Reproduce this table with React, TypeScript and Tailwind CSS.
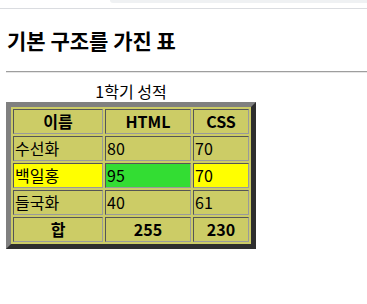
const rows = [
  { name: '수선화', html: '80', css: '70', rowBg: '', htmlBg: '' },
  { name: '백일홍', html: '95', css: '70', rowBg: 'bg-[#ffff00]', htmlBg: 'bg-[#33dd33]' },
  { name: '들국화', html: '40', css: '61', rowBg: '', htmlBg: '' },
];

const cell = 'h-[25px] border border-t-[#555555] border-l-[#555555] border-r-[#9a9a9a] border-b-[#9a9a9a] px-px py-0 leading-[21px]';

export default function App() {
  return (
    <div className="min-h-[304px] w-[367px] bg-white text-black" style={{ fontFamily: '"Noto Sans CJK KR", "Noto Sans", sans-serif' }}>
      {/* browser chrome strip */}
      <div className="flex h-[9px] border-b border-[#dadce0]">
        <div className="w-[110px]" />
        <div className="h-[3px] flex-1 rounded-bl-[8px] bg-[#eff1f3]" />
      </div>

      <h3 className="px-[7px] pt-[17px] text-[21px] font-bold leading-[29px]">기본 구조를 가진 표</h3>

      <div className="ml-[6px] mt-[16px] h-[2px] border-t border-b border-t-[#9e9e9e] border-b-[#e6e6e6]" />

      <table className="ml-[6px] mt-[7px] border-separate border-spacing-[2px] border-[5px] border-t-[#808080] border-l-[#808080] border-r-[#2e2e2e] border-b-[#2e2e2e] bg-[#cccc66] text-[16px]">
        <caption className="pb-[1px] pt-[1px] text-[16px] leading-[20px]">1학기 성적</caption>
        <thead>
          <tr>
            <th className={`${cell} w-[90px] text-center font-bold`}>이름</th>
            <th className={`${cell} w-[86px] text-center font-bold`}>HTML</th>
            <th className={`${cell} w-[56px] text-center font-bold`}>CSS</th>
          </tr>
        </thead>
        <tbody>
          {rows.map((r) => (
            <tr key={r.name} className={r.rowBg}>
              <td className={`${cell} text-left font-normal`}>{r.name}</td>
              <td className={`${cell} ${r.htmlBg} text-left font-normal`}>{r.html}</td>
              <td className={`${cell} text-left font-normal`}>{r.css}</td>
            </tr>
          ))}
        </tbody>
        <tfoot>
          <tr>
            <th className={`${cell} text-center font-bold`}>합</th>
            <th className={`${cell} text-center font-bold`}>255</th>
            <th className={`${cell} text-center font-bold`}>230</th>
          </tr>
        </tfoot>
      </table>
    </div>
  );
}
